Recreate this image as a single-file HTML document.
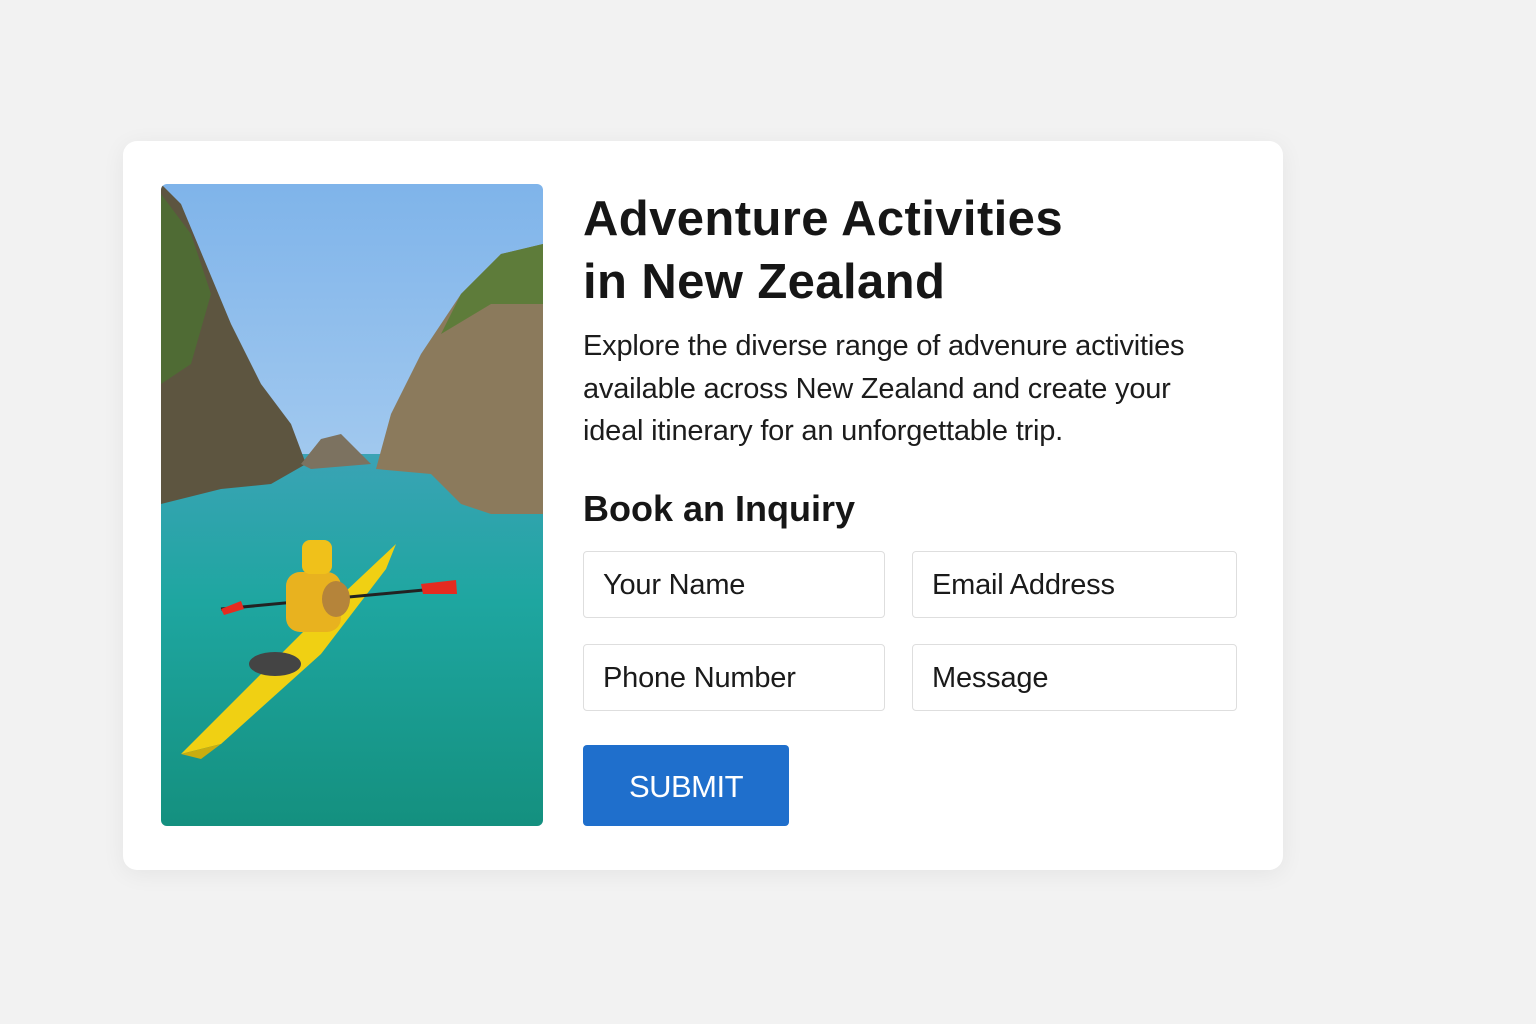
<!DOCTYPE html>
<html><head><meta charset="utf-8"><style>
*{margin:0;padding:0;box-sizing:border-box}
body{width:1536px;height:1024px;background:#f2f2f2;font-family:"Liberation Sans",sans-serif;position:relative;overflow:hidden}
.card{position:absolute;left:123px;top:141px;width:1160px;height:729px;background:#fff;border-radius:14px;box-shadow:0 4px 24px rgba(0,0,0,.06)}
.img{position:absolute;left:161px;top:184px;width:382px;height:642px;border-radius:6px;overflow:hidden}
h1{position:absolute;left:583px;top:188px;font-size:49px;line-height:63px;font-weight:700;color:#161616;letter-spacing:0.4px}
p{position:absolute;left:583px;top:325px;width:630px;font-size:29px;line-height:42.5px;color:#1c1c1c;letter-spacing:-0.2px}
h2{position:absolute;left:583px;top:488px;font-size:36px;font-weight:700;color:#161616;letter-spacing:0px}
.in{position:absolute;height:67px;border:1.5px solid #dedede;border-radius:4px;font-size:29px;color:#1a1a1a;padding-left:19px;line-height:66px;letter-spacing:-0.2px}
.btn{position:absolute;left:583px;top:745px;width:206px;height:81px;background:#1f6fcc;border-radius:4px;color:#fff;font-size:31px;text-align:center;line-height:83px;letter-spacing:-0.5px}
</style></head><body>
<div class="card"></div>
<div class="img"><svg width="382" height="642" viewBox="0 0 382 642">
<defs><linearGradient id="s" x1="0" y1="0" x2="0" y2="1"><stop offset="0" stop-color="#7fb4ea"/><stop offset="1" stop-color="#cfe4f5"/></linearGradient>
<linearGradient id="w" x1="0" y1="0" x2="0" y2="1"><stop offset="0" stop-color="#3aa3b5"/><stop offset=".4" stop-color="#1ea6a0"/><stop offset="1" stop-color="#14907f"/></linearGradient></defs>
<rect width="382" height="642" fill="url(#s)"/>
<rect y="270" width="382" height="372" fill="url(#w)"/>
<path d="M0 0 L20 20 L45 80 L70 140 L100 200 L130 240 L145 280 L110 300 L60 305 L0 320Z" fill="#5d5540"/>
<path d="M0 10 L30 50 L50 110 L30 180 L0 200Z" fill="#4f6b34"/>
<path d="M382 60 L340 70 L300 110 L260 170 L230 230 L215 285 L270 290 L300 320 L330 330 L382 330Z" fill="#8b7a5c"/>
<path d="M382 60 L340 70 L300 110 L280 150 L330 120 L382 120Z" fill="#5e7c3a"/>
<path d="M140 280 L160 255 L180 250 L200 270 L210 280 L150 285Z" fill="#7c7260"/>
<path d="M20 570 L150 440 L235 360 L225 385 L160 470 L60 560 Z" fill="#f0d013"/>
<path d="M20 570 L60 560 L40 575Z" fill="#c9ad10"/>
<ellipse cx="114" cy="480" rx="26" ry="12" fill="#444"/>
<line x1="60" y1="425" x2="295" y2="403" stroke="#222" stroke-width="3"/>
<path d="M60 425 L80 417 L83 425 L63 431Z" fill="#e52b20"/>
<path d="M260 400 L295 396 L296 410 L262 410Z" fill="#e52b20"/>
<rect x="125" y="388" width="55" height="60" rx="14" fill="#e8b21f"/>
<rect x="141" y="356" width="30" height="34" rx="8" fill="#f0c11a"/>
<ellipse cx="175" cy="415" rx="14" ry="18" fill="#b5843a"/>
</svg></div>
<h1>Adventure Activities<br>in New Zealand</h1>
<p>Explore the diverse range of advenure activities available across New Zealand and create your ideal itinerary for an unforgettable trip.</p>
<h2>Book an Inquiry</h2>
<div class="in" style="left:583px;top:551px;width:302px">Your Name</div>
<div class="in" style="left:912px;top:551px;width:325px">Email Address</div>
<div class="in" style="left:583px;top:644px;width:302px">Phone Number</div>
<div class="in" style="left:912px;top:644px;width:325px">Message</div>
<div class="btn">SUBMIT</div>
</body></html>
